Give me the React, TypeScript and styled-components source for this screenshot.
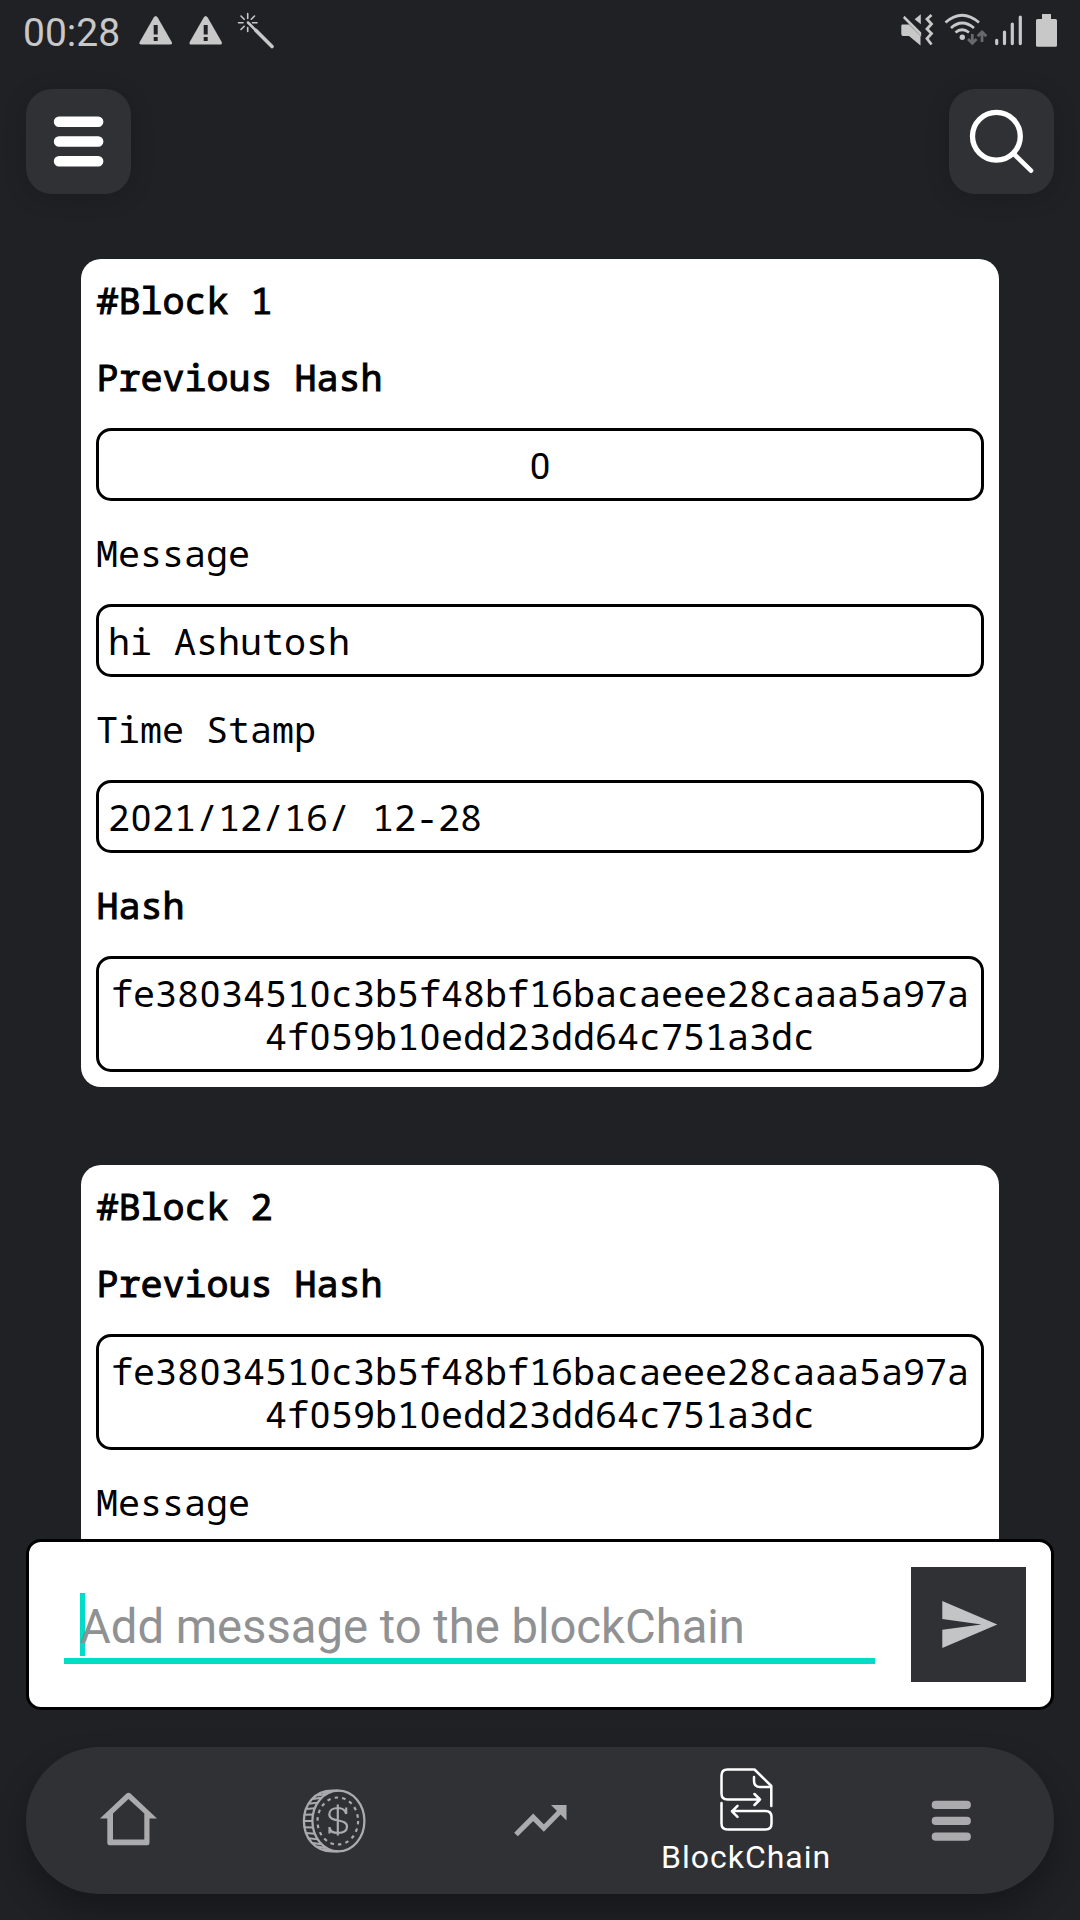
import React from "react";
import styled, { createGlobalStyle } from "styled-components";

const GlobalStyle = createGlobalStyle`
  * { box-sizing: border-box; }
  body { margin: 0; background: #202125; }
`;

const Screen = styled.div`
  position: relative;
  display: flex;
  flex-direction: column;
  width: 1080px;
  height: 1920px;
  overflow: hidden;
  background: #202125;
  font-family: Roboto, sans-serif;
`;

const StatusBar = styled.div`
  display: flex;
  justify-content: space-between;
  height: 63px;
  padding: 0 20px 0 23px;
`;

const StatusGroup = styled.div`
  display: flex;
`;

const Clock = styled.span`
  width: 116px;
  color: #c8c8c8;
  font-size: 39px;
  line-height: 66px;
`;

const TopBar = styled.header`
  display: flex;
  justify-content: space-between;
  height: 196px;
  padding: 26px 26px 0;
`;

const SquareButton = styled.button`
  width: 105px;
  height: 105px;
  padding: 0;
  border: 0;
  border-radius: 26px;
  background: #303135;
  box-shadow: 0 4px 24px rgba(0, 0, 0, 0.16);
`;

const BlockList = styled.main`
  display: flex;
  flex: none;
  flex-direction: column;
  gap: 78px;
  height: 1280px;
  padding: 0 81px;
  overflow: hidden;
`;

const Card = styled.section`
  display: flex;
  flex: none;
  flex-direction: column;
  padding: 19px 15px 15px;
  border-radius: 20px;
  background: #fff;
  color: #000;
  font-family: "Droid Sans Mono", "Noto Sans Mono", "DejaVu Sans Mono", monospace;
  font-size: 36.75px;
  letter-spacing: -0.05px;
  line-height: 43px;
`;

const Label = styled.div<{ $strong?: boolean }>`
  height: 43px;
  margin: 30px 0;
  padding: 1px 0 0 ${(p) => (p.$strong ? "0.4px" : "0")};
  -webkit-text-stroke: ${(p) => (p.$strong ? "1px #000" : "0")};
`;

const Title = styled(Label)`
  margin: 0 0 4px;
`;

const Field = styled.div<{ $center?: boolean }>`
  padding: 13px 9px 11px;
  border: 3px solid #000;
  border-radius: 15px;
  text-align: ${(p) => (p.$center ? "center" : "left")};
`;

const ValueLine = styled.div`
  height: 43px;
  white-space: nowrap;
`;

const OpenZero = styled.span`
  font-family: Roboto, sans-serif;
  letter-spacing: 0.66px;
  margin-left: 0.7px;
  line-height: 1;
`;

const Footer = styled.footer`
  display: flex;
  flex: none;
  flex-direction: column;
  gap: 37px;
  height: 381px;
  padding: 0 26px;
`;

const Composer = styled.div`
  display: flex;
  justify-content: space-between;
  height: 171px;
  padding: 25px 25px 0 35px;
  border: 3px solid #000;
  border-radius: 15px;
  background: #fff;
`;

const Input = styled.div`
  display: flex;
  width: 811px;
  height: 97px;
  padding: 26px 16px 0;
  border-bottom: 6px solid #00dcc8;
`;

const Caret = styled.span`
  flex: none;
  width: 5px;
  height: 63px;
  margin-right: -5px;
  background: #00dcc8;
`;

const Placeholder = styled.span`
  position: relative;
  color: #909193;
  font-size: 47.2px;
  line-height: 69px;
  white-space: nowrap;
`;

const SendButton = styled.button`
  width: 115px;
  height: 115px;
  padding: 0;
  border: 0;
  background: #303135;
`;

const Nav = styled.nav`
  display: flex;
  align-items: center;
  height: 147px;
  border-radius: 74px;
  background: #303135;
  box-shadow: 0 16px 32px rgba(0, 0, 0, 0.3);
`;

const NavItem = styled.button`
  display: flex;
  flex: 1;
  flex-direction: column;
  align-items: center;
  justify-content: center;
  height: 147px;
  padding: 0;
  border: 0;
  background: none;
  color: #fff;
  font: 400 32px Roboto, sans-serif;
  letter-spacing: 1px;
`;

const NavText = styled.span`
  margin: 2px 0 -4px 1px;
  line-height: 44px;
`;

const Drawing = styled.svg`
  display: block;
  flex: none;
`;

const LeftStatusIcons = () => (
  <Drawing width="140" height="63" viewBox="139 0 140 63" fill="#c8c8c8">
    {[155.7, 205.7].map((x) => (
      <g key={x}>
        <path d={`M${x - 2} 17.5Q${x} 14.5 ${x + 2} 17.5L${x + 16} 42Q${x + 17} 44.6 ${x + 14} 44.6H${x - 14}Q${x - 17} 44.6 ${x - 16} 42Z`} />
        <path d={`M${x - 2} 25h4v9.5h-4zM${x - 2} 37h4v4h-4z`} fill="#202125" />
      </g>
    ))}
    <g stroke="#c8c8c8" strokeLinecap="round" fill="none">
      <path strokeWidth="1.6" d="M247.7 13.5v5M247.7 27.5v4M238.5 22.7h4.5M252.5 22.7h4.5M241 16l3.2 3.2M254.5 16l-3.2 3.2M241 29.5l3.2-3.2" />
      <path strokeWidth="2.5" d="M248 22.5L256 30.5" />
      <path strokeWidth="3.6" d="M256 30.5L272 46.5" />
    </g>
  </Drawing>
);

const RightStatusIcons = () => (
  <Drawing width="160" height="63" viewBox="900 0 160 63" fill="#c8c8c8">
    <path d="M902 24.5h7L920.5 36V45.5L909 36H903Q901.3 36 901.3 34V26Q901.3 24.5 902 24.5ZM904.5 15.8L921.2 32.5V36.5L903 18ZM920.8 14.2V24.2L914.6 19.2Z" />
    <path d="M931.5 15l-4.5 4 4.5 5-4.5 5 4.5 4.5-4.5 5 4.5 6" stroke="#c8c8c8" strokeWidth="2.8" fill="none" />
    <g stroke="#c8c8c8" fill="none" strokeWidth="2.7">
      <path d="M945.5 22.5Q962 8 979 22.5M951 28Q962 18 974 28M955.5 32.5Q962 27 969 32.5" />
    </g>
    <circle cx="962.3" cy="37.2" r="2.7" />
    <path d="M972.3 34v9M968 39l4.3 4.3 4.3-4.3M982 42v-9M977.7 36.3L982 32l4.3 4.3" stroke="#69696b" strokeWidth="2.8" fill="none" />
    <path d="M996.7 40.3v3.3M1004.5 32v11.6M1012.3 24v19.6M1020.3 17v26.6" stroke="#c8c8c8" strokeWidth="3.2" strokeLinecap="round" />
    <path d="M1042 14h9v5h4.5q1.5 0 1.5 1.5v25q0 1.3-1.5 1.3h-18q-1.5 0-1.5-1.3v-25q0-1.5 1.5-1.5h4.5z" />
  </Drawing>
);

const MenuIcon = () => (
  <Drawing width="105" height="105" viewBox="0 0 105 105">
    <path d="M33 32.8H72.2M33 52.5H72.2M33 72.3H72.2" stroke="#fff" strokeWidth="10.4" strokeLinecap="round" />
  </Drawing>
);

const SearchIcon = () => (
  <Drawing width="105" height="105" viewBox="949 89 105 105">
    <g stroke="#fff" fill="none" strokeLinecap="round">
      <circle cx="996.4" cy="136.3" r="23.9" strokeWidth="5.3" />
      <path d="M1014 154L1031 170.7" strokeWidth="4.6" />
    </g>
  </Drawing>
);

const SendIcon = () => (
  <Drawing width="115" height="115" viewBox="911 1567 115 115">
    <path d="M942.3 1601L997.3 1624.5L942.3 1648V1629.7L981.5 1624.5L942.3 1619Z" fill="#c3c4c6" />
  </Drawing>
);

const HomeIcon = () => (
  <Drawing width="64" height="64" viewBox="97 1788.5 64 64">
    <path fill="#ababad" fillRule="evenodd" d="M100 1818L126.5 1793Q128.5 1791.5 130.5 1793L157 1818H149.5V1842.5Q149.5 1844.7 147.3 1844.7H109.5Q107.3 1844.7 107.3 1842.5V1818ZM113 1813V1839H144.3V1813L128.5 1798.5Z" />
  </Drawing>
);

const edgeTicks = Array.from({ length: 13 }, (_, i) => {
  const a = ((108 + i * 12) * Math.PI) / 180;
  const y = 32 - 29.5 * Math.sin(a);
  return `M${29 + 27 * Math.cos(a)} ${y}L${36.4 + 26 * Math.cos(a)} ${y + (y - 32) * 0.06}`;
}).join("");

const CoinIcon = () => (
  <Drawing width="64" height="64" viewBox="0 0 64 64" fill="none" stroke="#ababad">
    <ellipse cx="36.4" cy="32" rx="26" ry="30.4" strokeWidth="2.3" />
    <path d="M36.4 1.6H30C13 1.6 1.9 15 1.9 32S13 62.4 30 62.4H36.4" strokeWidth="2.3" />
    <path d={edgeTicks} strokeWidth="2" />
    <ellipse cx="35.8" cy="32" rx="20.3" ry="23.5" strokeWidth="2.2" strokeDasharray="3.5 4.15" />
    <path strokeWidth="2.2" d="M35.8 15.5V46.5M44.2 25V18.5M44.2 25C43.2 21 40 19 36 19C31 19 27.3 21.5 27.3 25.3C27.3 34 45 29 45 37.5C45 42 41 44 36 44C31 44 28 42 27.5 38.5M27.5 38V44.5" />
  </Drawing>
);

const TrendIcon = () => (
  <Drawing width="64" height="64" viewBox="508.5 1788.5 64 64">
    <path d="M516.5 1834L533.7 1816.8L544.3 1827.5L561 1810.5" stroke="#ababad" strokeWidth="5.2" fill="none" />
    <path d="M551.5 1804.5H567V1820Z" fill="#ababad" />
  </Drawing>
);

const ChainIcon = () => (
  <Drawing width="64" height="66" viewBox="714 1767 64 66" fill="none" stroke="#fff" strokeWidth="2.5" strokeLinecap="round" strokeLinejoin="round">
    <path d="M771.3 1806V1786L754.5 1769.5H727.5Q721.5 1769.5 721.5 1775.5V1793.5Q721.5 1799.5 727.5 1799.5H760M754 1777V1781Q754 1787 760 1787H771.3M754.5 1794L760 1799.5L754.5 1805" />
    <path d="M721.5 1803V1823.5Q721.5 1829.5 727.5 1829.5H765.5Q771.5 1829.5 771.5 1823.5V1817Q771.5 1811 765.5 1811H732M737.5 1805.8L732 1811.3L737.5 1816.8" />
  </Drawing>
);

const ListIcon = () => (
  <Drawing width="64" height="64" viewBox="919.2 1788.8 64 64">
    <path d="M936 1804.7H967M936 1820.7H967M936 1836.5H967" stroke="#ababad" strokeWidth="8.2" strokeLinecap="round" />
  </Drawing>
);

// A field fits 39 characters on a line; zeros are set without a slash.
const Value = ({ text }: { text: string }) => (
  <>
    {(text.match(/.{1,39}/g) ?? []).map((line, n) => (
      <ValueLine key={n}>
        {line.split(/(0)/).map((part, i) => (part === "0" ? <OpenZero key={i}>0</OpenZero> : part))}
      </ValueLine>
    ))}
  </>
);

const HASH = "fe38034510c3b5f48bf16bacaeee28caaa5a97a4f059b10edd23dd64c751a3dc";

const blocks = [
  { id: 1, previous: "0", message: "hi Ashutosh", time: "2021/12/16/ 12-28", hash: HASH },
  { id: 2, previous: HASH },
];

export default function App() {
  return (
    <Screen>
      <GlobalStyle />
      <StatusBar>
        <StatusGroup>
          <Clock>00:28</Clock>
          <LeftStatusIcons />
        </StatusGroup>
        <RightStatusIcons />
      </StatusBar>
      <TopBar>
        <SquareButton aria-label="Menu"><MenuIcon /></SquareButton>
        <SquareButton aria-label="Search"><SearchIcon /></SquareButton>
      </TopBar>
      <BlockList>
        {blocks.map((b) => (
          <Card key={b.id}>
            <Title $strong>{`#Block ${b.id}`}</Title>
            <Label $strong>Previous Hash</Label>
            <Field $center><Value text={b.previous} /></Field>
            <Label>Message</Label>
            {b.message && (
              <>
                <Field>{b.message}</Field>
                <Label>Time Stamp</Label>
                <Field><Value text={b.time} /></Field>
                <Label $strong>Hash</Label>
                <Field $center><Value text={b.hash} /></Field>
              </>
            )}
          </Card>
        ))}
      </BlockList>
      <Footer>
        <Composer>
          <Input>
            <Caret />
            <Placeholder>Add message to the blockChain</Placeholder>
          </Input>
          <SendButton aria-label="Send"><SendIcon /></SendButton>
        </Composer>
        <Nav>
          <NavItem aria-label="Home"><HomeIcon /></NavItem>
          <NavItem aria-label="Coins"><CoinIcon /></NavItem>
          <NavItem aria-label="Trends"><TrendIcon /></NavItem>
          <NavItem>
            <ChainIcon />
            <NavText>BlockChain</NavText>
          </NavItem>
          <NavItem aria-label="More"><ListIcon /></NavItem>
        </Nav>
      </Footer>
    </Screen>
  );
}
